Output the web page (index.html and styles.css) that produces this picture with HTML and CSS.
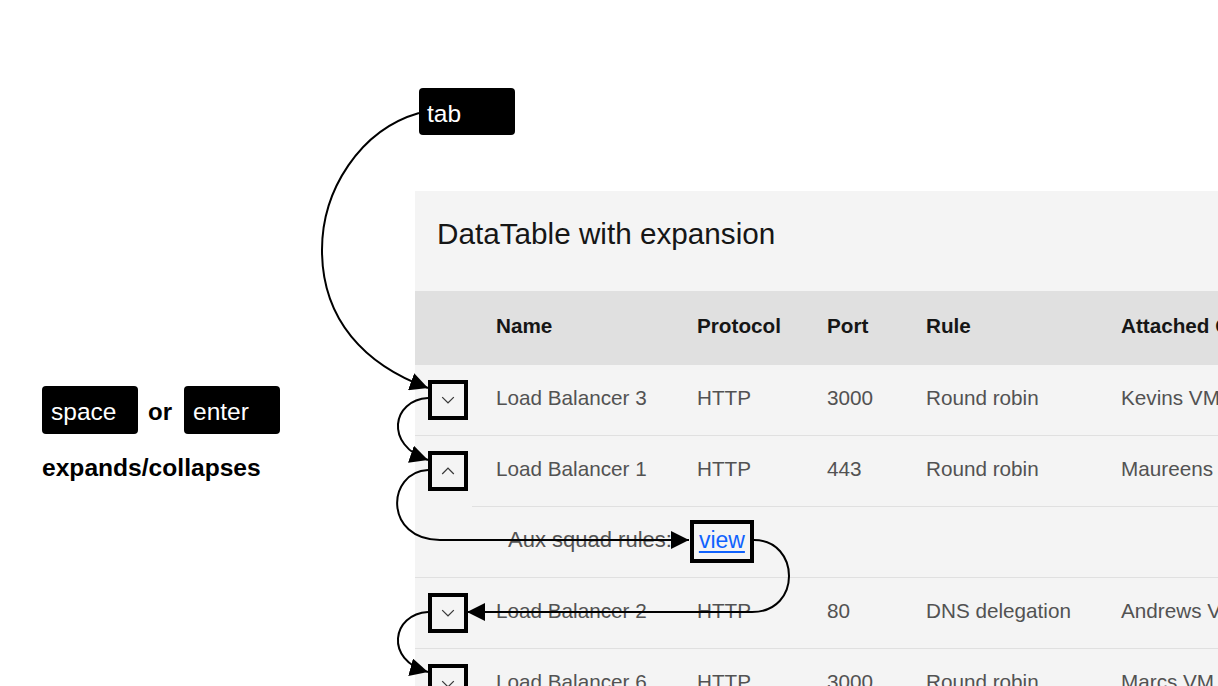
FILE: index.html
```html
<!DOCTYPE html>
<html lang="en">
<head>
<meta charset="utf-8">
<title>DataTable with expansion - keyboard</title>
<link rel="stylesheet" href="styles.css">
</head>
<body>
<div class="page">
  <aside class="legend">
    <div class="keys">
      <span class="key">space</span>
      <span class="or">or</span>
      <span class="key">enter</span>
    </div>
    <p class="hint">expands/collapses</p>
  </aside>

  <main class="main">
    <span class="key key-tab">tab</span>
    <section class="panel">
      <h2 class="title">DataTable with expansion</h2>
      <div class="table" role="table">
        <div class="row row-head" role="row">
          <div class="cell cell-expand"></div>
          <div class="cell">Name</div>
          <div class="cell">Protocol</div>
          <div class="cell">Port</div>
          <div class="cell">Rule</div>
          <div class="cell">Attached Groups</div>
        </div>

        <div class="row" role="row">
          <div class="cell cell-expand"><span class="expand-btn"><svg viewBox="0 0 16 16" width="20" height="20"><path d="M8 11L3 6l.7-.7L8 9.6l4.3-4.3.7.7z"/></svg></span></div>
          <div class="cell">Load Balancer 3</div>
          <div class="cell">HTTP</div>
          <div class="cell">3000</div>
          <div class="cell">Round robin</div>
          <div class="cell">Kevins VM Groups</div>
        </div>

        <div class="row row-parent" role="row">
          <div class="cell cell-expand"><span class="expand-btn"><svg viewBox="0 0 16 16" width="20" height="20"><path d="M8 5l5 5-.7.7L8 6.4l-4.3 4.3L3 10z"/></svg></span></div>
          <div class="cell">Load Balancer 1</div>
          <div class="cell">HTTP</div>
          <div class="cell">443</div>
          <div class="cell">Round robin</div>
          <div class="cell">Maureens VM Groups</div>
        </div>

        <div class="row-expanded" role="row">
          <span class="expanded-text">Aux squad rules:</span>
          <a class="link" href="#">view</a>
        </div>

        <div class="row" role="row">
          <div class="cell cell-expand"><span class="expand-btn"><svg viewBox="0 0 16 16" width="20" height="20"><path d="M8 11L3 6l.7-.7L8 9.6l4.3-4.3.7.7z"/></svg></span></div>
          <div class="cell">Load Balancer 2</div>
          <div class="cell">HTTP</div>
          <div class="cell">80</div>
          <div class="cell">DNS delegation</div>
          <div class="cell">Andrews VM Groups</div>
        </div>

        <div class="row" role="row">
          <div class="cell cell-expand"><span class="expand-btn"><svg viewBox="0 0 16 16" width="20" height="20"><path d="M8 11L3 6l.7-.7L8 9.6l4.3-4.3.7.7z"/></svg></span></div>
          <div class="cell">Load Balancer 6</div>
          <div class="cell">HTTP</div>
          <div class="cell">3000</div>
          <div class="cell">Round robin</div>
          <div class="cell">Marcs VM Groups</div>
        </div>
      </div>
    </section>
  </main>

  <svg class="arrows" width="1218" height="686" viewBox="0 0 1218 686" aria-hidden="true">
    <defs>
      <marker id="ah" viewBox="0 0 18 18" refX="18" refY="9" markerWidth="18" markerHeight="18" markerUnits="userSpaceOnUse" orient="auto">
        <path d="M0 0L18 9L0 18z" fill="#000"/>
      </marker>
    </defs>
    <path d="M419 113C360 130 322 190 322 250C322 320 365 365 428 388" marker-end="url(#ah)"/>
    <path d="M428 398C392 400 384 445 428 460" marker-end="url(#ah)"/>
    <path d="M428 470C386 472 384 540 440 540L689 540" marker-end="url(#ah)"/>
    <path d="M754 540C800 540 802 612 752 612L467 612" marker-end="url(#ah)"/>
    <path d="M428 612C392 614 384 660 428 672" marker-end="url(#ah)"/>
  </svg>
</div>
</body>
</html>
```

FILE: styles.css
```css
html, body {
  margin: 0;
  padding: 0;
  background: #ffffff;
  overflow: hidden;
}

body {
  font-family: "Liberation Sans", Arial, sans-serif;
  color: #161616;
}

.page {
  position: relative;
  display: flex;
  width: 1218px;
  height: 686px;
  overflow: hidden;
}

/* Left legend */
.legend {
  flex: 0 0 415px;
  box-sizing: border-box;
  padding: 386px 0 0 42px;
}

.keys {
  display: flex;
  align-items: center;
}

.key {
  display: flex;
  align-items: center;
  box-sizing: border-box;
  width: 96px;
  height: 48px;
  padding: 4px 0 0 9px;
  background: #000;
  color: #fff;
  border-radius: 4px;
  font-size: 24.5px;
  line-height: 1;
}

.or {
  margin: 0 12px 0 10px;
  padding-top: 3px;
  font-size: 24px;
  font-weight: 700;
  color: #000;
}

.hint {
  margin: 18px 0 0;
  font-size: 24.6px;
  line-height: 32px;
  font-weight: 700;
  color: #000;
}

/* Main area */
.main {
  flex: 1 1 auto;
  min-width: 0;
  padding-top: 88px;
  overflow: hidden;
}

.key-tab {
  margin-left: 4px;
  height: 47px;
  padding: 5px 0 0 8px;
}

.panel {
  margin-top: 56px;
  width: 1100px;
  background: #f4f4f4;
}

.title {
  margin: 0;
  box-sizing: border-box;
  height: 100px;
  padding: 22px 22px 0;
  font-size: 29.7px;
  line-height: 41px;
  font-weight: 400;
  color: #161616;
}

.table {
  font-size: 20.7px;
}

.row {
  display: grid;
  grid-template-columns: 57px 201px 130px 99px 195px 418px;
  align-items: center;
  box-sizing: border-box;
  height: 71px;
  border-top: 1px solid #e0e0e0;
  color: #525252;
}

.row-head {
  height: 73px;
  border-top: none;
  background: #e0e0e0;
  color: #161616;
  font-weight: 700;
}

.cell {
  padding: 0 0 4px 24px;
  white-space: nowrap;
  overflow: hidden;
}

.cell-expand {
  padding: 0 0 0 13px;
  display: flex;
  align-items: center;
}

.expand-btn {
  display: flex;
  align-items: center;
  justify-content: center;
  box-sizing: border-box;
  width: 40px;
  height: 40px;
  border: 4px solid #000;
}

.expand-btn svg {
  fill: #393939;
}

.row-expanded {
  display: flex;
  align-items: center;
  box-sizing: border-box;
  height: 71px;
  padding-left: 93px;
  color: #525252;
  background-image: linear-gradient(#e0e0e0, #e0e0e0);
  background-size: calc(100% - 57px) 1px;
  background-position: 57px 0;
  background-repeat: no-repeat;
}

.expanded-text {
  font-size: 22px;
  padding-bottom: 3px;
}

.link {
  margin-left: 18px;
  box-sizing: border-box;
  height: 43px;
  padding: 0 5px;
  border: 4px solid #000;
  font-size: 23px;
  line-height: 33px;
  color: #0f62fe;
  text-decoration: underline;
  text-underline-offset: 3px;
}

/* Overlay arrows */
.arrows {
  position: absolute;
  top: 0;
  left: 0;
  pointer-events: none;
}

.arrows > path {
  fill: none;
  stroke: #000;
  stroke-width: 2;
}
```
